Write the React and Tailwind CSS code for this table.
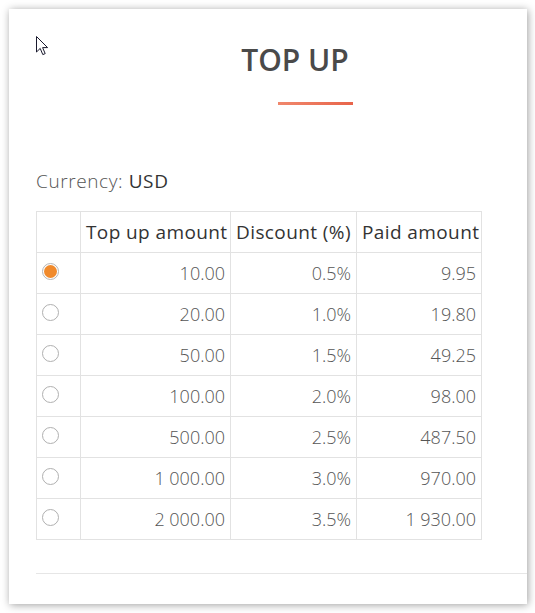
import React, { useState } from "react";

const rates = [
  { amount: "10.00", discount: "0.5%", paid: "9.95" },
  { amount: "20.00", discount: "1.0%", paid: "19.80" },
  { amount: "50.00", discount: "1.5%", paid: "49.25" },
  { amount: "100.00", discount: "2.0%", paid: "98.00" },
  { amount: "500.00", discount: "2.5%", paid: "487.50" },
  { amount: "1 000.00", discount: "3.0%", paid: "970.00" },
  { amount: "2 000.00", discount: "3.5%", paid: "1 930.00" },
];

const Radio = ({ checked, onClick }) => (
  <button
    type="button"
    onClick={onClick}
    className={`w-[17px] h-[17px] rounded-full border flex items-center justify-center ${
      checked ? "border-[#b5b5b5]" : "border-[#b0b0b0]"
    }`}
  >
    {checked && <span className="w-[13px] h-[13px] rounded-full bg-[#f08a2c]" />}
  </button>
);

const Cursor = () => (
  <svg
    className="absolute left-[27px] top-[27px]"
    width="13"
    height="20"
    viewBox="0 0 13 20"
  >
    <path
      d="M0.5 0.5 L0.5 16 L4.2 12.4 L6.8 18.6 L9.2 17.6 L6.6 11.6 L11.6 11.6 Z"
      fill="#fff"
      stroke="#1a1a2e"
      strokeWidth="1"
    />
  </svg>
);

const cell = "h-[41px] border-r border-b border-[#e2e2e2] flex items-center";
const head = `${cell} pl-[5px] text-[19px] tracking-[0.4px] text-[#333] whitespace-nowrap`;
const num = `${cell} justify-end pr-[5px] text-[18px] font-light text-[#555]`;

export default function App() {
  const [selected, setSelected] = useState(0);

  return (
    <div className="min-h-screen bg-white p-[9px] font-['Open_Sans','Liberation_Sans',sans-serif]">
      <div className="relative w-[518px] h-[595px] bg-white shadow-[1px_1px_8px_rgba(0,0,0,0.38)] pt-[31px] flex flex-col">
        <Cursor />

        <h1 className="text-center pl-[54px] text-[30px] leading-[40px] font-semibold text-[#4a4a4a]">
          TOP UP
        </h1>
        <div className="ml-[269px] mt-[22px] w-[75px] h-[3px] bg-gradient-to-r from-[#f0876c] to-[#e8644a]" />

        <div className="ml-[27px] mt-[64px] text-[19px] leading-[24px] tracking-[0.6px] font-light text-[#555]">
          Currency: <span className="font-normal text-[#333]">USD</span>
        </div>

        {/* Rates table */}
        <div className="ml-[27px] mt-[18px] w-[446px] grid grid-cols-[44px_150px_126px_125px] border-l border-t border-[#e2e2e2]">
          <div className={cell} />
          <div className={head}>Top up amount</div>
          <div className={head}>Discount (%)</div>
          <div className={head}>Paid amount</div>

          {rates.map((r, i) => (
            <React.Fragment key={r.amount}>
              <div className={`${cell} pl-[5px] pb-[3px]`}>
                <Radio checked={selected === i} onClick={() => setSelected(i)} />
              </div>
              <div className={num}>{r.amount}</div>
              <div className={num}>{r.discount}</div>
              <div className={num}>{r.paid}</div>
            </React.Fragment>
          ))}
        </div>

        <div className="ml-[27px] mt-[33px] h-px bg-[#e6e6e6]" />
      </div>
    </div>
  );
}
